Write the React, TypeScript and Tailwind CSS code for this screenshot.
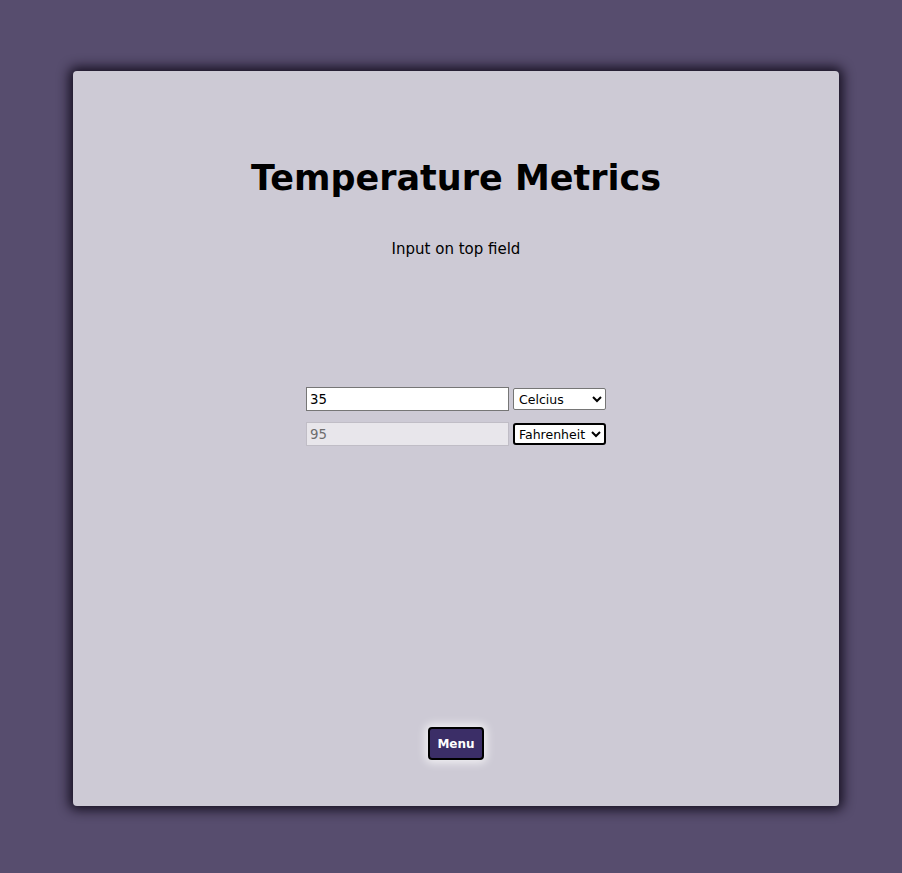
import React from "react";

export default function App() {
  const font = { fontFamily: '"Comic Sans MS", "DejaVu Sans", sans-serif' };
  return (
    <div className="min-h-[873px] w-full bg-[#574d6e] pl-[73px] pr-[63px] pt-[71px] pb-[67px]" style={font}>
      <div className="w-[766px] h-[735px] bg-[#cdcad5] rounded-[4px] shadow-[0_0_12px_4px_rgba(15,10,25,0.9)] flex flex-col items-center">
        <h1 className="mt-[80px] text-[35px] leading-[54px] font-bold text-black">Temperature Metrics</h1>
        <p className="mt-[34px] text-[15px] leading-[20px] text-black">Input on top field</p>
        <div className="mt-[128px] flex flex-col gap-[11px]">
          <div className="flex items-center gap-[4px]">
            <input
              className="w-[203px] h-[24px] bg-white border border-[#767676] px-[3px] text-[13.3px] text-black outline-none"
              defaultValue="35"
              style={font}
            />
            <select
              className="w-[93px] h-[22px] bg-white border border-[#767676] rounded-[2px] text-[12.5px] text-black px-[1px]"
              defaultValue="c"
              style={font}
            >
              <option value="c">Celcius</option>
              <option value="f">Fahrenheit</option>
            </select>
          </div>
          <div className="flex items-center gap-[4px]">
            <input
              className="w-[203px] h-[24px] bg-[#e8e6eb] border border-[#c0bdc6] px-[3px] text-[13.3px] text-[#6d6d6d] outline-none"
              defaultValue="95"
              disabled
              style={font}
            />
            <select
              className="w-[93px] h-[22px] bg-white border-2 border-black rounded-[3px] text-[12.5px] text-black px-0"
              defaultValue="f"
              style={font}
            >
              <option value="c">Celcius</option>
              <option value="f">Fahrenheit</option>
            </select>
          </div>
        </div>
        <div className="flex-1" />
        <button
          className="mb-[46px] w-[56px] h-[33px] bg-[#3b2e67] border-2 border-black rounded-[4px] text-white text-[12px] font-bold shadow-[0_0_8px_3px_rgba(255,255,255,0.7)]"
          style={font}
        >
          Menu
        </button>
      </div>
    </div>
  );
}
